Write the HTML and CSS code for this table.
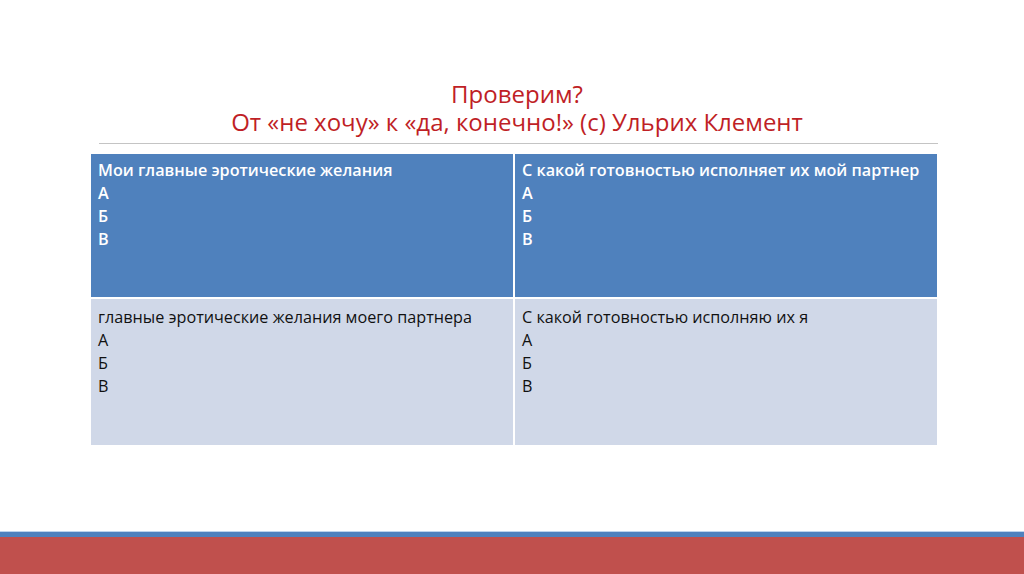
FILE: index.html
```html
<!DOCTYPE html>
<html lang="ru">
<head>
<meta charset="utf-8">
<link rel="stylesheet" href="styles.css">
</head>
<body>
<div class="slide">
  <header class="title">
    <div class="title-line">Проверим?</div>
    <div class="title-line">От «не хочу» к «да, конечно!» (с) Ульрих Клемент</div>
  </header>
  <div class="rule"></div>
  <div class="table">
    <div class="cell head">Мои главные эротические желания<br>А<br>Б<br>В</div>
    <div class="cell head">С какой готовностью исполняет их мой партнер<br>А<br>Б<br>В</div>
    <div class="cell body">главные эротические желания моего партнера<br>А<br>Б<br>В</div>
    <div class="cell body">С какой готовностью исполняю их я<br>А<br>Б<br>В</div>
  </div>
  <div class="spacer"></div>
  <div class="bar-blue"></div>
  <div class="bar-red"></div>
</div>
</body>
</html>
```
FILE: styles.css
```css
html, body {
  margin: 0;
  padding: 0;
  background: #fff;
}
.slide {
  width: 1024px;
  height: 574px;
  display: flex;
  flex-direction: column;
  font-family: "Open Sans", "Liberation Sans", sans-serif;
}
.title {
  margin-top: 80px;
  text-align: center;
  color: #bf1f26;
  font-size: 24px;
  line-height: 28px;
  padding-left: 10px;
}
.rule {
  margin: 7px 86px 0 99px;
  height: 1px;
  background: #c4c4c4;
}
.table {
  margin: 10px 87px 0 91px;
  display: grid;
  grid-template-columns: 422px 422px;
  grid-template-rows: 143px 146px;
  gap: 2px;
}
.cell {
  padding: 5px 7px;
  font-size: 16.2px;
  line-height: 23px;
}
.head {
  background: #4f81bd;
  color: #fff;
  font-weight: 600;
}
.body {
  padding-top: 7px;
  background: #d0d8e8;
  color: #111;
}
.spacer {
  flex: 1;
}
.bar-blue {
  height: 5px;
  background: #4f81bd;
  border-top: 1px solid #bcd3ec;
}
.bar-red {
  height: 37px;
  background: #c0504d;
}
```
